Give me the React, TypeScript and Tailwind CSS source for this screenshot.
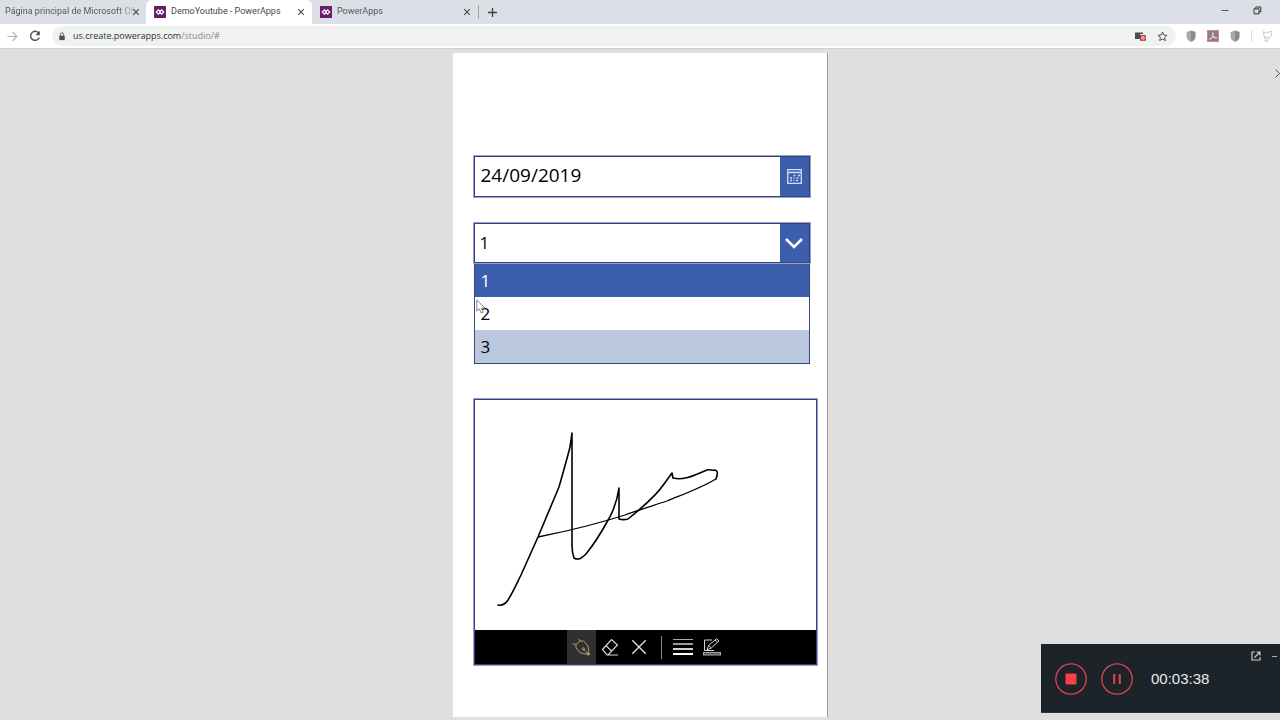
import { useState } from 'react';
import { twJoin } from 'tailwind-merge';

type TabProps = { title: string; isActive?: boolean; hasIcon?: boolean; className?: string };

const options = ['1', '2', '3'];

function CloseIcon() {
  return (
    <svg viewBox="0 0 8 8" className="h-2 w-2" fill="none" stroke="#4a4d51" strokeWidth="1.2">
      <path d="M1.2 1.2 6.8 6.8M6.8 1.2 1.2 6.8" />
    </svg>
  );
}

function AppLogo() {
  return (
    <svg viewBox="0 0 12 12" className="h-3 w-3 shrink-0">
      <rect width="12" height="12" fill="#6a1f6b" />
      <path d="M4.4 3.8 2.2 6l2.2 2.2L6.6 6zM7.6 3.8 5.4 6l2.2 2.2L9.8 6z" fill="none" stroke="#fff" strokeWidth="1.1" />
    </svg>
  );
}

function Tab({ title, isActive, hasIcon, className }: TabProps) {
  return (
    <div
      className={twJoin(
        'flex h-6 shrink-0 items-center',
        isActive ? 'rounded-t-md bg-white text-[#45484c]' : 'text-[#55585d]',
        className,
      )}
    >
      <button className="flex min-w-0 flex-1 items-center gap-[5px] text-left">
        {hasIcon && <AppLogo />}
        <span className={twJoin('flex-1 whitespace-nowrap', !hasIcon && 'mask-r-from-85% mask-r-to-100%')}>
          {title}
        </span>
      </button>
      <button aria-label="Cerrar" className="ml-1.5">
        <CloseIcon />
      </button>
    </div>
  );
}

function ShieldIcon() {
  return (
    <svg viewBox="0 0 10 12" className="h-3 w-2.5">
      <path d="M5 .4 9.4 2v4.4C9.4 9 7.6 10.7 5 11.7 2.4 10.7.6 9 .6 6.4V2z" fill="#a8a8a8" />
      <path d="M5 .4 9.4 2v4.4C9.4 9 7.6 10.7 5 11.7z" fill="#8b8b8b" />
    </svg>
  );
}

function BrowserBar() {
  return (
    <header className="text-[9px]">
      {/* tabs */}
      <div className="flex h-6 items-center bg-[#dcdfe5] font-[Roboto,'Noto_Sans',sans-serif]">
        <Tab title="Página principal de Microsoft Off" className="w-[146px] pr-1.5 pl-[5px]" />
        <Tab title="DemoYoutube - PowerApps" isActive hasIcon className="w-[166px] pr-[7px] pl-2" />
        <Tab title="PowerApps" hasIcon className="w-[166px] pr-[7px] pl-2" />
        <span className="h-3.5 w-px bg-[#a0a3a8]" />
        <button aria-label="Nueva pestaña" className="ml-[9px]">
          <svg viewBox="0 0 9 9" className="h-[9px] w-[9px]" stroke="#3c4043" strokeWidth="1.3">
            <path d="M4.5 0v9M0 4.5h9" />
          </svg>
        </button>
        <div className="mr-[18px] mb-1 ml-auto flex items-center gap-6">
          <button aria-label="Minimizar">
            <svg viewBox="0 0 8 8" className="h-2 w-2" stroke="#55585c">
              <path d="M.5 4.5h7" />
            </svg>
          </button>
          <button aria-label="Restaurar">
            <svg viewBox="0 0 9 9" className="h-[9px] w-[9px]" fill="none" stroke="#333">
              <path d="M1 2.8h5v5H1zM2.800 2.800V1h5v5H6" />
            </svg>
          </button>
        </div>
      </div>
      {/* address bar */}
      <div className="flex h-6 items-center bg-white font-['Open_Sans','Noto_Sans',sans-serif]">
        <button aria-label="Adelante" className="ml-[7px]">
          <svg viewBox="0 0 11 11" className="h-[11px] w-[11px]" fill="none" stroke="#b0b2b5" strokeWidth="1.2">
            <path d="M.5 5.5h9M5.500 1.200l4.300 4.300-4.300 4.300" />
          </svg>
        </button>
        <button aria-label="Volver a cargar" className="mx-[11px]">
          <svg viewBox="0 0 12 12" className="h-3 w-3">
            <path d="M9.800 3.200A4.500 4.500 0 1 0 10.300 7.500" fill="none" stroke="#505357" strokeWidth="1.4" />
            <path d="M10.800.8v4.400H6.400z" fill="#505357" />
          </svg>
        </button>
        <div className="flex h-5 flex-1 items-center rounded-full bg-[#f0f2f2] pr-2 pl-1.5">
          <svg viewBox="0 0 8 10" className="mr-[7px] h-[9px] w-2">
            <rect x="1" y="4" width="6" height="5" fill="#4f5256" />
            <path d="M2.300 4V2.600a1.700 1.700 0 0 1 3.400 0V4" fill="none" stroke="#4f5256" />
          </svg>
          <span className="flex-1 text-[#2f3236]">
            us.create.powerapps.com<span className="text-[#85888c]">/studio/#</span>
          </span>
          <svg viewBox="0 0 11 10" className="mr-[11px] h-2.5 w-[11px]">
            <path d="M0 1.500h8V3H5v5H0z" fill="#47504f" />
            <rect x="5.700" y="4.700" width="4.400" height="4.400" fill="#fff" stroke="#c22f36" strokeWidth="1.4" />
            <rect x="7.200" y="6.200" width="1.400" height="1.400" fill="#c22f36" />
          </svg>
          <button aria-label="Añadir a marcadores">
            <svg viewBox="0 0 11 11" className="h-[11px] w-[11px]" fill="none" stroke="#4c4f53">
              <path d="m5.500 1 1.300 3 3.200.3-2.400 2.100.7 3.200-2.800-1.700-2.800 1.700.7-3.200L1 4.300 4.200 4z" />
            </svg>
          </button>
        </div>
        <div className="ml-2.5 flex items-center gap-[11px]">
          <ShieldIcon />
          <svg viewBox="0 0 12 12" className="h-3 w-3">
            <rect x=".5" y=".5" width="11" height="11" fill="#927b7e" stroke="#c98c8c" />
            <path
              d="M5.800 2.500c.7 0 .2 2.400-.5 4C4.500 8.200 3 10 2.500 9.300c-.3-.8 3.200-2.200 5-2.200 1.500 0 2.300.5 2 1-.5.7-2.200-.4-3.200-1.900-.8-1.300-1.200-3.700-.5-3.700z"
              fill="none"
              stroke="#f5eaea"
              strokeWidth=".8"
            />
          </svg>
          <ShieldIcon />
          <span className="h-3 w-px bg-[#dedede]" />
        </div>
        <svg viewBox="0 0 12 12" className="mr-1.5 ml-2.5 h-3 w-3 shrink-0" fill="none" stroke="#bcbcbc">
          <path d="M2 3.500 1 1.500l3 1.500 3-1 2-1 .5 1.500V6L7 8 3 7 1.500 5zM3 7v4h3V8.500" strokeDasharray="2 .6" />
        </svg>
      </div>
    </header>
  );
}

function SignaturePad() {
  return (
    <section className="mt-[35px] border border-[#333f80] ring-1 ring-[#3a4684]/50">
      <svg viewBox="475 400 341 230" className="block w-full" fill="none" stroke="#000" strokeLinejoin="round">
        <path
          d="M498 605c5 1 8-2 10-5 5-8 9-17 13-25l17-38 21-50c4-14 8-28 11-40l2-14v112c0 5 1 10 2 13 5 3 9-1 12-4 8-10 15-21 21-32 5-8 10-20 12-34v31c3 1 5 1 9 0 15-12 28-23 36-35l8-11 1 5c8 2 15 0 22-3l12-5c4-1 5 1 8 0 3 1 3 3 1 9"
          strokeWidth="1.6"
          strokeLinecap="round"
        />
        <path d="M716 479c-15 9-32 15-49 22-15 5-28 9-42 14-28 9-57 16-87 22" strokeWidth="1.3" />
      </svg>
      <div className="flex h-[34px] items-center justify-center bg-black pl-[3px]">
        <button aria-label="Lápiz" className="flex h-full w-[29px] items-center justify-center bg-[#303030]">
          <svg viewBox="0 0 18 18" className="h-[18px] w-[18px]" fill="none" stroke="#b79a6c">
            <path d="M17 16.500 8.500 15 4 10V6.500L8 3h3.500l4.500 5zM17 16.500l-5.500-5.500M4 6.500.8 5.800M8 3 6.800.8" />
            <circle cx="11.300" cy="10.800" r="1.100" />
            <circle cx="16.400" cy="16" r="1" fill="#b79a6c" />
          </svg>
        </button>
        <button aria-label="Borrador" className="flex h-full w-[29px] items-center justify-center">
          <svg viewBox="0 0 18 18" className="h-[18px] w-[18px]" fill="none" stroke="#d8d8d8" strokeWidth="1.2">
            <path d="m1.500 11.500 9-10 6 5.500-9.500 10H6zM5 7.700l6 5.500M6 17h11" />
          </svg>
        </button>
        <button aria-label="Borrar" className="flex h-full w-[29px] items-center justify-center">
          <svg viewBox="0 0 16 16" className="h-4 w-4" stroke="#e5e5e5" strokeWidth="1.3">
            <path d="m1.300 1.300 13.400 13.400M14.700 1.300 1.300 14.700" />
          </svg>
        </button>
        <span className="mx-[7px] h-[23px] w-px bg-[#8c8c8c]" />
        <button aria-label="Grosor" className="flex h-full w-[29px] items-center justify-center">
          <svg viewBox="0 0 20 16" className="h-4 w-5">
            <rect y="0" width="20" height="1" fill="#a8a8a8" />
            <rect y="4" width="20" height="2" fill="#9a9a9a" />
            <rect y="9" width="20" height="2" fill="#d0d0d0" />
            <rect y="14" width="20" height="2" fill="#fff" />
          </svg>
        </button>
        <button aria-label="Color" className="flex h-full w-[29px] items-center justify-center">
          <svg viewBox="0 0 20 18" className="h-[18px] w-5" fill="none" stroke="#d6d6d6">
            <path d="M10 2H2.500v10.500H12M5 12l1.500-4.500L14.500.8l2.500 2-7.500 7zM6.500 7.500l3 2.300M13 2l2.500 2.200" />
            <rect x="1.500" y="14.500" width="17" height="2.500" fill="#555" stroke="#a6a6a6" />
          </svg>
        </button>
      </div>
    </section>
  );
}

function Recorder() {
  return (
    <aside className="fixed right-0 bottom-[7px] flex h-[69px] w-[239px] items-center gap-3.5 border-b border-[#24403d] bg-[#1c2329] pt-px pl-3.5">
      <button aria-label="Detener">
        <svg viewBox="0 0 32 32" className="h-8 w-8">
          <circle cx="16" cy="16" r="15.2" fill="none" stroke="#dc4550" strokeWidth="1.3" />
          <rect x="10.500" y="10.500" width="11" height="11" rx="1" fill="#fb3e48" />
        </svg>
      </button>
      <button aria-label="Pausar">
        <svg viewBox="0 0 32 32" className="h-8 w-8" stroke="#dc4550">
          <circle cx="16" cy="16" r="15.2" fill="none" strokeWidth="1.3" />
          <path d="M13.200 11v10M18.800 11v10" strokeWidth="2" />
        </svg>
      </button>
      <time className="mt-px ml-1 font-['Liberation_Sans',sans-serif] text-[15px] text-[#e8eaeb]">00:03:38</time>
      <div className="absolute top-[7px] right-[3px] flex items-center gap-[11px]">
        <button aria-label="Abrir">
          <svg viewBox="0 0 10 10" className="h-2.5 w-2.5" fill="none" stroke="#c9cdd0" strokeWidth="1.2">
            <path d="M4 1H1v8h8V6M5.500 1H9v3.500M9 1 3.500 6.500" />
          </svg>
        </button>
        <button aria-label="Minimizar grabadora">
          <svg viewBox="0 0 5 10" className="h-2.5 w-[5px]" stroke="#a9adb0">
            <path d="M0 5.500h5" />
          </svg>
        </button>
      </div>
    </aside>
  );
}

export default function App() {
  const [date, setDate] = useState('24/09/2019');
  const [value, setValue] = useState('1');

  return (
    <div className="flex min-h-screen flex-col overflow-x-hidden bg-[#dfdfdf]">
      <BrowserBar />
      <main className="relative flex flex-1 flex-col border-t border-[#cfcfcf] pt-1 pb-[3px]">
        <button aria-label="Cerrar vista previa" className="absolute top-5 -right-1">
          <svg viewBox="0 0 9 9" className="h-[9px] w-[9px]" fill="none" stroke="#555">
            <path d="m.5.5 8 8M8.500.5l-8 8" />
          </svg>
        </button>
        <div className="mx-auto w-full max-w-[375px] flex-1 border-r border-[#9b9b9b] bg-white pt-[103px] pr-2.5 pl-[21px] font-['Open_Sans','Noto_Sans',sans-serif] text-black">
          <div className="mr-[7px]">
            <div className="flex h-[41px] border border-[#333f80] ring-1 ring-[#3a4684]/50">
              <input
                aria-label="Fecha"
                value={date}
                onChange={(e) => setDate(e.target.value)}
                className="min-w-0 flex-1 bg-white pb-0.5 pl-1.5 text-[19px] outline-none"
              />
              <button aria-label="Calendario" className="flex w-[29px] items-center justify-center bg-[#3b5fac]">
                <svg viewBox="0 0 15 15" className="h-[15px] w-[15px]" fill="none" stroke="#d3def2">
                  <path d="M.7.7h13.600v13.600H.7zM1 3.500h13" strokeWidth="1.3" />
                  <path d="M6.500 6.500h2M11 6.500h2M3 9h2M6.500 9h1M9.500 9h2M3 11.500h2M6.500 11.500h1M9 11.500h2" strokeWidth="1.4" />
                </svg>
              </button>
            </div>
            <div className="mt-[26px] flex h-10 border border-[#333f80] ring-1 ring-[#3a4684]/50">
              <select
                aria-label="Valor"
                value={value}
                onChange={(e) => setValue(e.target.value)}
                className="min-w-0 flex-1 appearance-none bg-white pl-[5px] text-[17px] outline-none"
              >
                {options.map((option) => (
                  <option key={option}>{option}</option>
                ))}
              </select>
              <span className="pointer-events-none flex w-[29px] items-center justify-center bg-[#3b5fac]">
                <svg viewBox="0 0 18 11" className="h-[11px] w-[18px]" fill="none" stroke="#fff" strokeWidth="2.6">
                  <path d="m1 1 8 8 8-8" />
                </svg>
              </span>
            </div>
            <ul role="listbox" aria-label="Opciones" className="mt-px border border-t-0 border-[#3a4684]">
              {options.map((option) => (
                <li key={option} role="option" aria-selected={option === value}>
                  <button
                    onClick={() => setValue(option)}
                    className={twJoin(
                      'block h-[33px] w-full pl-1.5 text-left text-[17px]',
                      option === value && 'bg-[#3b5fac] text-white',
                      option === '3' && option !== value && 'bg-[#bac8df]',
                    )}
                  >
                    {option}
                  </button>
                </li>
              ))}
            </ul>
          </div>
          <SignaturePad />
        </div>
        {/* mouse pointer */}
        <svg
          viewBox="0 0 10 15"
          className="pointer-events-none absolute top-[250px] left-1/2 -ml-[164px] h-[15px] w-2.5"
          fill="#fff"
          stroke="#777"
          strokeWidth=".9"
        >
          <path d="M.8 1v11l2.600-2.200L5.200 14l2-.9-1.800-4H9z" />
        </svg>
      </main>
      <Recorder />
    </div>
  );
}
